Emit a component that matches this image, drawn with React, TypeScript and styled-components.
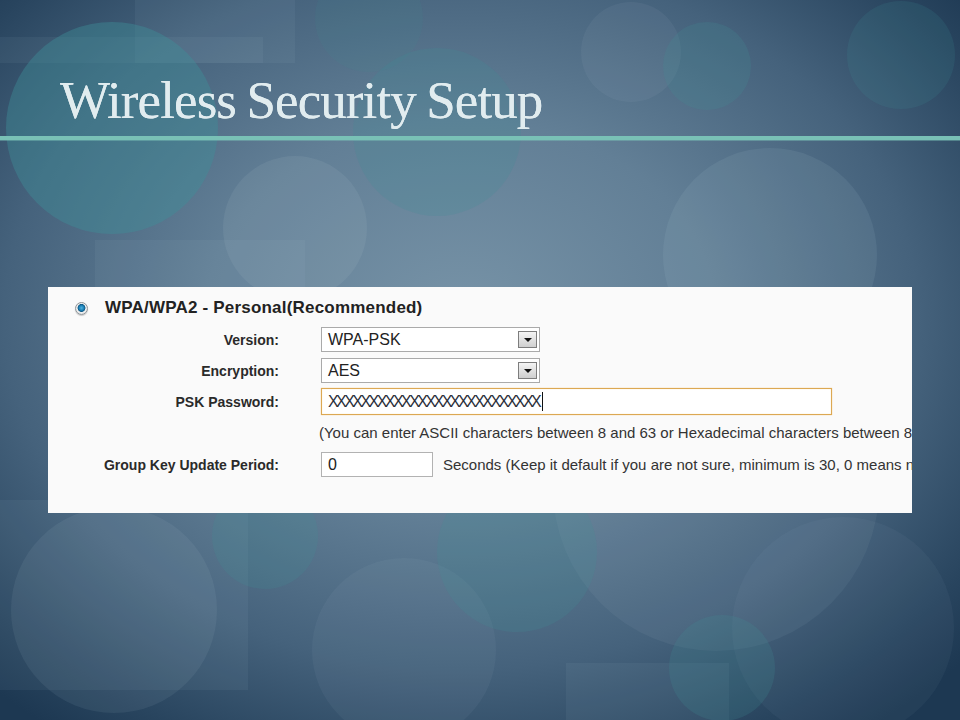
import * as React from 'react'
import styled, { createGlobalStyle } from 'styled-components'

const GlobalStyle = createGlobalStyle`
  html, body {
    margin: 0;
    padding: 0;
    background: #1f3b55;
  }
`

const Slide = styled.div`
  position: relative;
  width: 960px;
  height: 720px;
  overflow: hidden;
  background: radial-gradient(ellipse 70% 72% at 48% 44%, #7793a7 0%, #627f96 38%, #45627c 68%, #28445e 90%, #1d3852 100%);
  font-family: 'Liberation Sans', Arial, sans-serif;
`

const Backdrop = styled.svg`
  position: absolute;
  left: 0;
  top: 0;
  width: 960px;
  height: 720px;
`

const Content = styled.div`
  position: relative;
  display: flex;
  flex-direction: column;
`

const Title = styled.h1`
  margin: 74px 0 0 60px;
  font-family: 'Liberation Serif', 'Times New Roman', serif;
  font-weight: normal;
  font-size: 53px;
  line-height: 53px;
  letter-spacing: -0.9px;
  word-spacing: -2px;
  color: #e1ecef;
  text-shadow: 0 0 0.6px #e1ecef;
`

const Rule = styled.div`
  margin-top: 9px;
  height: 4px;
  background: #79c1b6;
  box-shadow: 0 1px 0 rgba(121, 193, 182, 0.45);
`

const Panel = styled.div`
  margin: 147px 0 0 48px;
  width: 864px;
  height: 226px;
  box-sizing: border-box;
  padding-top: 11px;
  background: #fafafa;
  overflow: hidden;
  color: #222;
`

const Heading = styled.div`
  display: flex;
  align-items: center;
  height: 20px;
  padding-left: 27px;
  gap: 17px;
  font-weight: bold;
  font-size: 17px;
  letter-spacing: 0.2px;
  white-space: nowrap;
`

const Radio = styled.span`
  width: 13px;
  height: 13px;
  box-sizing: border-box;
  border-radius: 50%;
  border: 1px solid #8f9599;
  background: radial-gradient(circle at 50% 45%, #4fb4e0 0, #1b7eb4 2.5px, #0f5a86 3.6px, #f2f2f2 4.3px, #c9cdd0 100%);
  box-shadow: 0 1px 1px rgba(0, 0, 0, 0.2);
`

const Row = styled.div<{ $top: number }>`
  display: grid;
  grid-template-columns: 231px auto;
  column-gap: 42px;
  align-items: center;
  margin-top: ${p => p.$top}px;
  white-space: nowrap;
`

const Label = styled.div`
  text-align: right;
  font-weight: bold;
  font-size: 14px;
  color: #2a2a2a;
`

const Select = styled.div`
  display: flex;
  align-items: center;
  justify-content: space-between;
  width: 219px;
  height: 25px;
  box-sizing: border-box;
  border: 1px solid #aaaaaa;
  background: #fff;
  padding: 0 2px 0 6px;
  font-size: 16px;
  color: #222;
`

const Arrow = styled.span`
  display: flex;
  align-items: center;
  justify-content: center;
  width: 19px;
  height: 17px;
  box-sizing: border-box;
  border: 1px solid #7d7d7d;
  background: linear-gradient(#f4f4f4, #cfcfcf);

  &::after {
    content: '';
    border-left: 4px solid transparent;
    border-right: 4px solid transparent;
    border-top: 4px solid #111;
  }
`

const Input = styled.div<{ $width: number; $focus?: boolean }>`
  display: flex;
  align-items: center;
  width: ${p => p.$width}px;
  height: ${p => (p.$focus ? 27 : 25)}px;
  box-sizing: border-box;
  padding-left: 6px;
  background: #fff;
  border: 1px solid ${p => (p.$focus ? '#dca853' : '#b2b2b2')};
  box-shadow: ${p => (p.$focus ? 'inset 0 0 1px #f2cf92, 0 0 1px #efc47c' : 'none')};
  font-size: 16px;
  color: #222;
`

const Masked = styled.span`
  letter-spacing: -2.55px;
  color: #2b2f3a;
`

const Caret = styled.span`
  width: 1px;
  height: 19px;
  margin-left: 3px;
  background: #111;
`

const Hint = styled.div`
  margin: 9px 0 0 271px;
  height: 18px;
  line-height: 18px;
  font-size: 15px;
  color: #333;
  white-space: nowrap;
`

const Inline = styled.div`
  display: flex;
  align-items: center;
  gap: 10px;
  font-size: 15px;
  color: #333;
`

const tealCircles = [
  { cx: 112, cy: 128, r: 106, o: 0.42 },
  { cx: 437, cy: 132, r: 84, o: 0.22 },
  { cx: 707, cy: 66, r: 44, o: 0.2 },
  { cx: 901, cy: 55, r: 54, o: 0.16 },
  { cx: 369, cy: 18, r: 54, o: 0.1 },
  { cx: 265, cy: 536, r: 53, o: 0.2 },
  { cx: 517, cy: 552, r: 80, o: 0.2 },
  { cx: 722, cy: 668, r: 53, o: 0.2 },
]

const paleCircles = [
  { cx: 631, cy: 52, r: 50, o: 0.07 },
  { cx: 295, cy: 228, r: 72, o: 0.11 },
  { cx: 770, cy: 255, r: 107, o: 0.1 },
  { cx: 114, cy: 610, r: 103, o: 0.09 },
  { cx: 404, cy: 650, r: 92, o: 0.06 },
  { cx: 716, cy: 488, r: 163, o: 0.07 },
  { cx: 843, cy: 628, r: 111, o: 0.05 },
]

const rects = [
  { x: 135, y: 0, w: 160, h: 63 },
  { x: 0, y: 37, w: 263, h: 26 },
  { x: 95, y: 240, w: 210, h: 50 },
  { x: 0, y: 500, w: 248, h: 190 },
  { x: 566, y: 663, w: 163, h: 57 },
]

const Background = () => (
  <Backdrop viewBox="0 0 960 720">
    {rects.map((r, i) => (
      <rect key={'r' + i} x={r.x} y={r.y} width={r.w} height={r.h} fill="#a9c3d0" fillOpacity={0.07} />
    ))}
    {paleCircles.map((c, i) => (
      <circle key={'p' + i} cx={c.cx} cy={c.cy} r={c.r} fill="#b4cad6" fillOpacity={c.o} />
    ))}
    {tealCircles.map((c, i) => (
      <circle key={'t' + i} cx={c.cx} cy={c.cy} r={c.r} fill="#3f8f98" fillOpacity={c.o} />
    ))}
  </Backdrop>
)

export default function App() {
  return (
    <Slide>
      <GlobalStyle />
      <Background />
      <Content>
        <Title>Wireless Security Setup</Title>
        <Rule />
        <Panel>
          <Heading>
            <Radio />
            WPA/WPA2 - Personal(Recommended)
          </Heading>
          <Row $top={9}>
            <Label>Version:</Label>
            <Select>
              WPA-PSK
              <Arrow />
            </Select>
          </Row>
          <Row $top={6}>
            <Label>Encryption:</Label>
            <Select>
              AES
              <Arrow />
            </Select>
          </Row>
          <Row $top={5}>
            <Label>PSK Password:</Label>
            <Input $width={511} $focus>
              <Masked>XXXXXXXXXXXXXXXXXXXXXXXXXX</Masked>
              <Caret />
            </Input>
          </Row>
          <Hint>
            (You can enter ASCII characters between 8 and 63 or Hexadecimal characters between 8 and 64.)
          </Hint>
          <Row $top={10}>
            <Label>Group Key Update Period:</Label>
            <Inline>
              <Input $width={112}>0</Input>
              Seconds (Keep it default if you are not sure, minimum is 30, 0 means no update)
            </Inline>
          </Row>
        </Panel>
      </Content>
    </Slide>
  )
}
